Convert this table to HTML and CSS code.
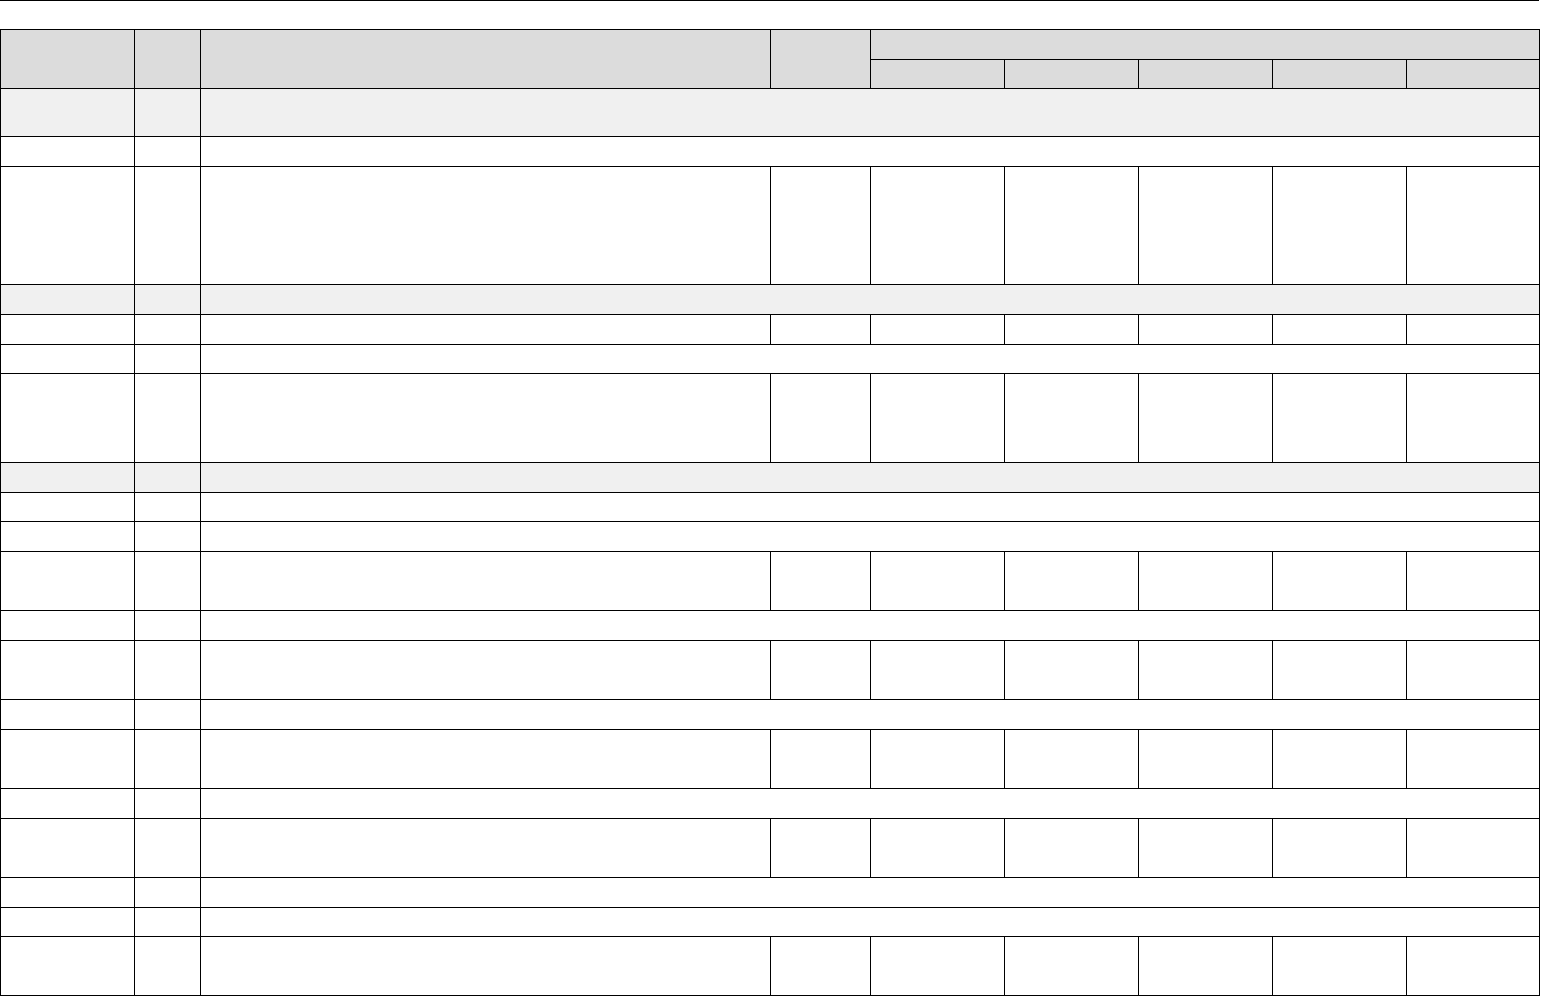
FILE: index.html
```html
<!DOCTYPE html>
<html lang="en">
<head>
<meta charset="utf-8">
<title>Table</title>
<link rel="stylesheet" href="styles.css">
</head>
<body>
<div class="rule"></div>
<table class="grid">
  <colgroup>
    <col class="c1"><col class="c2"><col class="c3"><col class="c4">
    <col class="c5"><col class="c5"><col class="c5"><col class="c5"><col class="c9">
  </colgroup>
  <thead>
    <tr class="h30">
      <th rowspan="2"></th><th rowspan="2"></th><th rowspan="2"></th><th rowspan="2"></th>
      <th colspan="5"></th>
    </tr>
    <tr class="h29">
      <th></th><th></th><th></th><th></th><th></th>
    </tr>
  </thead>
  <tbody>
    <tr class="h48 shade"><td></td><td></td><td colspan="7"></td></tr>
    <tr class="h30"><td></td><td></td><td colspan="7"></td></tr>
    <tr class="h118"><td></td><td></td><td></td><td></td><td></td><td></td><td></td><td></td><td></td></tr>
    <tr class="h30 shade"><td></td><td></td><td colspan="7"></td></tr>
    <tr class="h30"><td></td><td></td><td></td><td></td><td></td><td></td><td></td><td></td><td></td></tr>
    <tr class="h29"><td></td><td></td><td colspan="7"></td></tr>
    <tr class="h89"><td></td><td></td><td></td><td></td><td></td><td></td><td></td><td></td><td></td></tr>
    <tr class="h30 shade"><td></td><td></td><td colspan="7"></td></tr>
    <tr class="h29"><td></td><td></td><td colspan="7"></td></tr>
    <tr class="h30"><td></td><td></td><td colspan="7"></td></tr>
    <tr class="h59"><td></td><td></td><td></td><td></td><td></td><td></td><td></td><td></td><td></td></tr>
    <tr class="h30"><td></td><td></td><td colspan="7"></td></tr>
    <tr class="h59"><td></td><td></td><td></td><td></td><td></td><td></td><td></td><td></td><td></td></tr>
    <tr class="h30"><td></td><td></td><td colspan="7"></td></tr>
    <tr class="h59"><td></td><td></td><td></td><td></td><td></td><td></td><td></td><td></td><td></td></tr>
    <tr class="h30"><td></td><td></td><td colspan="7"></td></tr>
    <tr class="h59"><td></td><td></td><td></td><td></td><td></td><td></td><td></td><td></td><td></td></tr>
    <tr class="h30"><td></td><td></td><td colspan="7"></td></tr>
    <tr class="h29"><td></td><td></td><td colspan="7"></td></tr>
    <tr class="h59"><td></td><td></td><td></td><td></td><td></td><td></td><td></td><td></td><td></td></tr>
  </tbody>
</table>
</body>
</html>
```
FILE: styles.css
```css
html, body {
  margin: 0;
  padding: 0;
  background: #ffffff;
  font-family: "Liberation Sans", Arial, sans-serif;
  font-size: 13px;
  color: #000;
}

.rule {
  width: 1539px;
  height: 0;
  border-top: 1px solid #000;
  margin-bottom: 28px;
}

.grid {
  border-collapse: collapse;
  table-layout: fixed;
  width: 1539px;
}

.grid th,
.grid td {
  border: 1px solid #000;
  padding: 0;
}

.grid thead th {
  background: #dcdcdc;
}

.grid .shade td {
  background: #f0f0f0;
}

.c1 { width: 134px; }
.c2 { width: 66px; }
.c3 { width: 570px; }
.c4 { width: 100px; }
.c5 { width: 134px; }
.c9 { width: 133px; }

.h29 { height: 29px; }
.h30 { height: 30px; }
.h48 { height: 48px; }
.h59 { height: 59px; }
.h89 { height: 89px; }
.h118 { height: 118px; }
```
